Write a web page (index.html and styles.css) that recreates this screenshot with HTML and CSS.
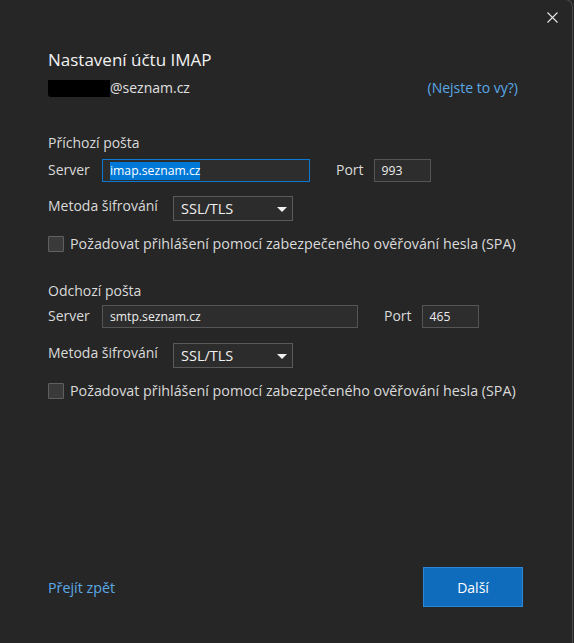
FILE: index.html
```html
<!DOCTYPE html>
<html lang="cs">
<head>
<meta charset="utf-8">
<title>Nastavení účtu IMAP</title>
<link rel="stylesheet" href="styles.css">
</head>
<body>
<div class="window">
  <div class="topbar">
    <button class="close" aria-label="Zavřít">
      <svg width="11" height="11" viewBox="0 0 11 11"><path d="M0.5 0.5 L10.5 10.5 M10.5 0.5 L0.5 10.5" stroke="#e6e6e6" stroke-width="1.1" fill="none"/></svg>
    </button>
  </div>
  <div class="content">
    <h1 class="title">Nastavení účtu IMAP</h1>
    <div class="account">
      <span class="account-id"><span class="redact"></span>@seznam.cz</span>
      <a class="link">(Nejste to vy?)</a>
    </div>

    <section class="group group-in">
      <div class="group-title">Příchozí pošta</div>
      <div class="row row-server">
        <label class="lbl lbl-server">Server</label>
        <div class="input input-focused server-in"><span class="selected">imap.seznam.cz</span></div>
        <label class="lbl lbl-port">Port</label>
        <div class="input port">993</div>
      </div>
      <div class="row row-method">
        <label class="lbl lbl-method">Metoda šifrování</label>
        <div class="select"><span>SSL/TLS</span><svg class="caret" width="10" height="5" viewBox="0 0 10 5"><path d="M0 0 H10 L5 5 Z" fill="#f0f0f0"/></svg></div>
      </div>
      <div class="check-row">
        <span class="box"></span>
        <span class="check-text">Požadovat přihlášení pomocí zabezpečeného ověřování hesla (SPA)</span>
      </div>
    </section>

    <section class="group group-out">
      <div class="group-title">Odchozí pošta</div>
      <div class="row row-server">
        <label class="lbl lbl-server">Server</label>
        <div class="input server-out">smtp.seznam.cz</div>
        <label class="lbl lbl-port">Port</label>
        <div class="input port">465</div>
      </div>
      <div class="row row-method">
        <label class="lbl lbl-method">Metoda šifrování</label>
        <div class="select"><span>SSL/TLS</span><svg class="caret" width="10" height="5" viewBox="0 0 10 5"><path d="M0 0 H10 L5 5 Z" fill="#f0f0f0"/></svg></div>
      </div>
      <div class="check-row">
        <span class="box"></span>
        <span class="check-text">Požadovat přihlášení pomocí zabezpečeného ověřování hesla (SPA)</span>
      </div>
    </section>
  </div>
  <div class="footer">
    <a class="link back">Přejít zpět</a>
    <button class="primary">Další</button>
  </div>
</div>
</body>
</html>
```

FILE: styles.css
```css
html, body {
  margin: 0;
  padding: 0;
  background: #262626;
}
body {
  width: 574px;
  height: 643px;
  overflow: hidden;
  font-family: "Open Sans", "Noto Sans", sans-serif;
  font-size: 14px;
  color: #dcdcdc;
}
.window {
  box-sizing: border-box;
  width: 573px;
  height: 644px;
  margin-top: -1px;
  border-top: 1px solid #4a4a4a;
  border-right: 1px solid #4a4a4a;
  border-top-right-radius: 8px;
  background: #262626;
  display: flex;
  flex-direction: column;
}
.topbar {
  height: 35px;
  display: flex;
  justify-content: flex-end;
  align-items: center;
  padding-right: 14px;
}
.close {
  background: none;
  border: 0;
  padding: 0;
  width: 11px;
  height: 11px;
  display: flex;
}
.content {
  padding-left: 48px;
}
.title {
  margin: 13px 0 0;
  font-size: 17px;
  font-weight: 400;
  line-height: 24px;
  color: #f2f2f2;
}
.account {
  margin-top: 6px;
  display: flex;
  justify-content: space-between;
  padding-right: 54px;
  line-height: 20px;
}
.account-id {
  color: #e0e0e0;
}
.redact {
  display: inline-block;
  width: 62px;
  height: 17px;
  background: #000;
  vertical-align: -4px;
  border-bottom-left-radius: 3px;
}
.link {
  color: #5aa9e6;
  cursor: pointer;
}
.group-title {
  line-height: 20px;
  color: #dadada;
}
.group-in .group-title { margin-top: 35px; }
.group-out .group-title { margin-top: 29px; }
.row {
  display: flex;
  align-items: flex-start;
}
.group-in .row-server { margin-top: 6px; }
.group-out .row-server { margin-top: 4px; }
.row-method { margin-top: 14px; }
.group-out .row-method { margin-top: 15px; }
.lbl {
  line-height: 21px;
  color: #dadada;
}
.lbl-server { width: 54px; }
.lbl-method { width: 125px; line-height: 20px; }
.lbl-port { margin: 0 10px 0 26px; }
.input {
  box-sizing: border-box;
  height: 23px;
  border: 1px solid #555555;
  background: #2d2d2d;
  color: #ececec;
  font-size: 12.2px;
  line-height: 21px;
  padding-left: 7px;
  white-space: nowrap;
}
.input-focused {
  border-color: #0a78d4;
}
.server-in { width: 208px; }
.server-out { width: 256px; }
.port { width: 57px; }
.selected {
  display: inline-block;
  background: #0078d7;
  color: #ffffff;
  line-height: 18px;
  margin-top: 1px;
}
.select {
  box-sizing: border-box;
  width: 120px;
  height: 25px;
  border: 1px solid #5a5a5a;
  background: #2c2c2c;
  color: #f0f0f0;
  font-size: 14.5px;
  line-height: 23px;
  padding: 0 5px 0 7px;
  display: flex;
  justify-content: space-between;
  align-items: center;
}
.caret { margin-top: 1px; }
.check-row {
  margin-top: 15px;
  display: flex;
  align-items: center;
  gap: 6px;
  line-height: 16px;
}
.group-out .check-row { margin-top: 15px; }
.box {
  box-sizing: border-box;
  width: 16px;
  height: 16px;
  border: 1px solid #606060;
  background: #3a3a3a;
  border-radius: 1px;
}
.check-text {
  color: #dadada;
  font-size: 14.3px;
}
.footer {
  margin-top: auto;
  padding: 0 49px 36px 48px;
  display: flex;
  justify-content: space-between;
  align-items: center;
}
.back { font-size: 14.3px; }
.primary {
  box-sizing: border-box;
  width: 100px;
  height: 40px;
  background: #0f6cbd;
  border: 1px solid #2b88d8;
  color: #ffffff;
  font-family: "Open Sans", "Noto Sans", sans-serif;
  font-size: 14px;
  padding: 0;
}
```
